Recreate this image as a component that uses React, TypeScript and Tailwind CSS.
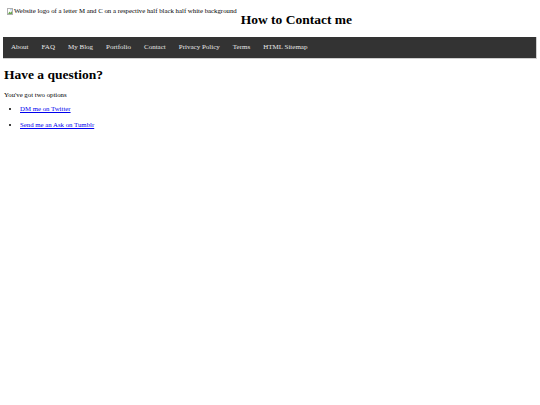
const navLinks = ["About", "FAQ", "My Blog", "Portfolio", "Contact", "Privacy Policy", "Terms", "HTML Sitemap"];

function BrokenImage() {
  return (
    <svg width="6" height="7" viewBox="0 0 6 7" className="mr-[1px] inline-block">
      <rect x="0.5" y="0.5" width="5" height="6" fill="#fff" stroke="#b0b0b0" />
      <path d="M1 6 L2.5 3.5 L3.5 4.8 L5 3 L5 6 Z" fill="#6aa84f" />
      <rect x="3.5" y="1.3" width="1" height="1" fill="#4a90d9" />
    </svg>
  );
}

export default function App() {
  return (
    <div className="min-h-[405px] bg-white text-black font-['Liberation_Serif',serif]">
      <header className="flex items-start pl-[7px] pt-[6px]">
        <div className="flex items-center text-[6.8px] leading-[10px]">
          <BrokenImage />
          <span>Website logo of a letter M and C on a respective half black half white background</span>
        </div>
        <h1 className="ml-[4px] mt-[5px] text-[13.5px] font-bold leading-[18px]">How to Contact me</h1>
      </header>

      <nav className="mx-[3px] mt-[8px] h-[22px] bg-[#333333] border-b border-r border-[#cfcfcf] flex items-center pl-[8px]">
        <ul className="flex gap-[13px] text-[7px] text-[#e8e8e8]">
          {navLinks.map((link) => (
            <li key={link}>
              <a href="#">{link}</a>
            </li>
          ))}
        </ul>
      </nav>

      <main className="px-[4px]">
        <h2 className="mt-[7px] text-[13.5px] font-bold leading-[18px]">Have a question?</h2>
        <p className="mt-[6px] text-[6.8px] leading-[10px]">You've got two options</p>
        <ul className="mt-[4px] pl-[16px] list-disc text-[6.8px] leading-[10px]">
          <li>
            <a href="#" className="text-[#0000ee] underline">DM me on Twitter</a>
          </li>
          <li className="mt-[6px]">
            <a href="#" className="text-[#0000ee] underline">Send me an Ask on Tumblr</a>
          </li>
        </ul>
      </main>
    </div>
  );
}
